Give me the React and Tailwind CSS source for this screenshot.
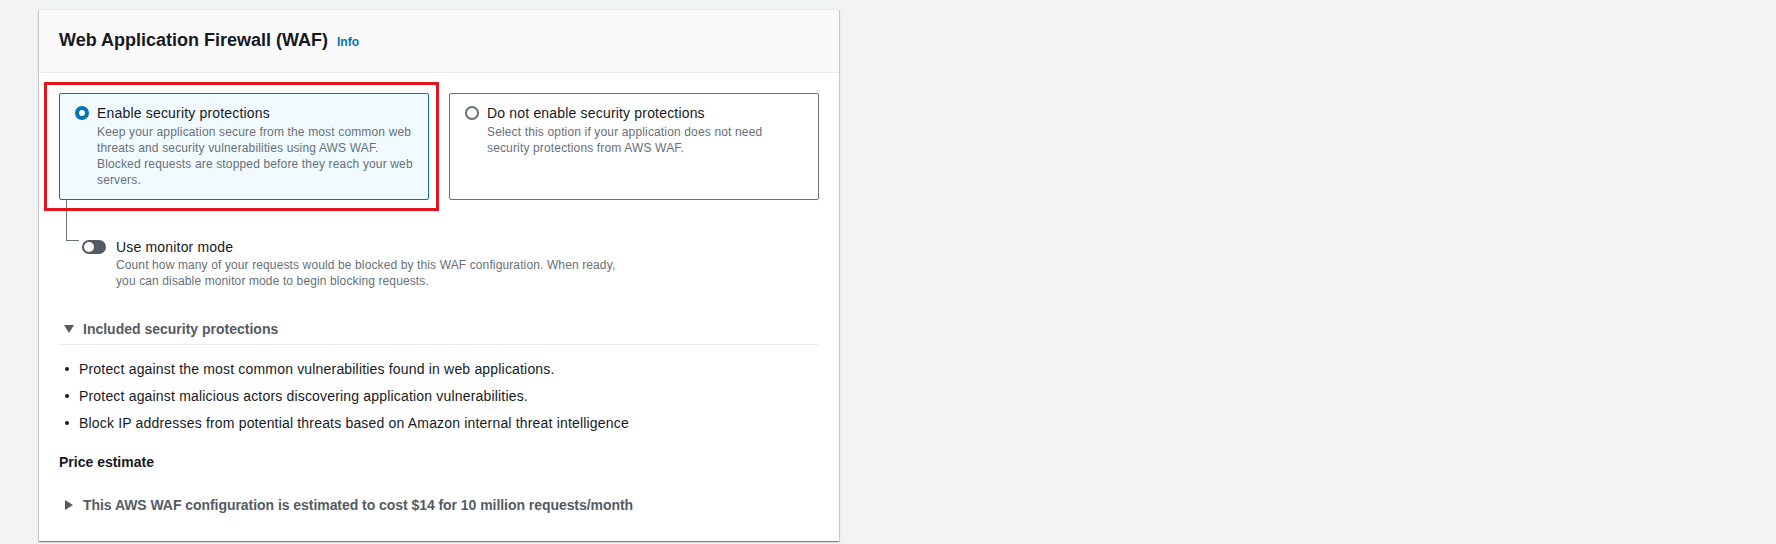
import React from "react";

function Radio({ checked }) {
  if (checked) {
    return (
      <span className="block w-[14px] h-[14px] rounded-full border-[4px] border-[#0073bb] bg-white box-border" />
    );
  }
  return (
    <span className="block w-[14px] h-[14px] rounded-full border-2 border-[#687078] bg-white box-border" />
  );
}

function Tile({ checked, title, lines, outline }) {
  return (
    <div
      className={
        "relative rounded-[2px] border pl-[15px] pr-[12px] pt-[9px] pb-[11px] " +
        (checked ? "border-[#0073bb] bg-[#f1faff]" : "border-[#687078] bg-white")
      }
    >
      {outline && (
        <div className="pointer-events-none absolute -left-[16px] -top-[12px] -right-[11px] -bottom-[12px] border-[3px] border-[#e3141b]" />
      )}
      <div className="flex gap-2">
        <div className="h-[20px] flex items-center shrink-0">
          <Radio checked={checked} />
        </div>
        <div>
          <div className="text-[14px] leading-[20px] tracking-[0.18px] text-[#16191f]">{title}</div>
          <div className="mt-px text-[12px] leading-[16px] tracking-[0.15px] text-[#687078]">
            {lines.map((l, i) => (
              <div key={i} className="whitespace-nowrap">
                {l}
              </div>
            ))}
          </div>
        </div>
      </div>
    </div>
  );
}

export default function App() {
  return (
    <div className="min-h-[544px] w-full bg-[#f2f3f3] pt-[9px] pl-[39px] font-['Liberation_Sans',Arial,sans-serif]">
      <div className="w-[800px] h-[532px] bg-white border-t border-[#eaeded] shadow-[0_1px_1px_0_rgba(0,28,36,0.3),1px_1px_1px_0_rgba(0,28,36,0.15),-1px_1px_1px_0_rgba(0,28,36,0.15)]">
        {/* Header */}
        <div className="h-[63px] bg-[#fafafa] border-b border-[#eaeded] flex items-center pl-[20px] pb-[2px]">
          <div className="flex items-baseline">
            <h2 className="text-[18px] leading-[22px] font-bold text-[#16191f]">
              Web Application Firewall (WAF)
            </h2>
            <span className="ml-[9px] text-[12px] font-bold text-[#0073bb]">Info</span>
          </div>
        </div>

        {/* Body */}
        <div className="px-[20px] pt-[20px]">
          <div className="grid grid-cols-2 gap-[20px]">
            <Tile
              checked
              outline
              title="Enable security protections"
              lines={[
                "Keep your application secure from the most common web",
                "threats and security vulnerabilities using AWS WAF.",
                "Blocked requests are stopped before they reach your web",
                "servers.",
              ]}
            />
            <Tile
              title="Do not enable security protections"
              lines={[
                "Select this option if your application does not need",
                "security protections from AWS WAF.",
              ]}
            />
          </div>

          {/* Monitor mode */}
          <div className="flex">
            <div className="ml-[7px] w-[13px] h-[41px] border-l border-b border-[#687078] shrink-0" />
            <div className="ml-[3px] mt-[37px] flex gap-[10px]">
              <div className="h-[20px] flex items-center shrink-0">
                <span className="relative block w-[24px] h-[14px] rounded-full bg-[#545b64]">
                  <span className="absolute left-[2px] top-[2px] w-[10px] h-[10px] rounded-full bg-white" />
                </span>
              </div>
              <div>
                <div className="text-[14px] leading-[20px] tracking-[0.18px] text-[#16191f]">Use monitor mode</div>
                <div className="text-[12px] leading-[16px] tracking-[0.12px] text-[#687078]">
                  <div className="whitespace-nowrap">
                    Count how many of your requests would be blocked by this WAF configuration. When ready,
                  </div>
                  <div className="whitespace-nowrap">
                    you can disable monitor mode to begin blocking requests.
                  </div>
                </div>
              </div>
            </div>
          </div>

          {/* Included security protections */}
          <div className="mt-[30px] pb-[5px] border-b border-[#eaeded] flex items-center pl-[5px] gap-[9px]">
            <svg width="10" height="8" viewBox="0 0 10 8" className="shrink-0">
              <path d="M0 0 H10 L5 8 Z" fill="#545b64" />
            </svg>
            <span className="text-[14px] leading-[20px] font-bold text-[#545b64]">
              Included security protections
            </span>
          </div>

          <ul className="mt-[14px] flex flex-col gap-[7px]">
            {[
              "Protect against the most common vulnerabilities found in web applications.",
              "Protect against malicious actors discovering application vulnerabilities.",
              "Block IP addresses from potential threats based on Amazon internal threat intelligence",
            ].map((t, i) => (
              <li key={i} className="flex items-center gap-[10px] pl-[6px] text-[14px] leading-[20px] tracking-[0.18px] text-[#16191f]">
                <span className="block w-[4px] h-[4px] rounded-full bg-[#16191f] shrink-0" />
                <span>{t}</span>
              </li>
            ))}
          </ul>

          <div className="mt-[19px] text-[14px] leading-[20px] font-bold text-[#16191f]">Price estimate</div>

          <div className="mt-[23px] flex items-center pl-[6px] gap-[10px]">
            <svg width="8" height="10" viewBox="0 0 8 10" className="shrink-0">
              <path d="M0 0 L8 5 L0 10 Z" fill="#545b64" />
            </svg>
            <span className="text-[14px] leading-[20px] font-bold tracking-[-0.05px] text-[#545b64]">
              This AWS WAF configuration is estimated to cost $14 for 10 million requests/month
            </span>
          </div>
        </div>
      </div>
    </div>
  );
}
